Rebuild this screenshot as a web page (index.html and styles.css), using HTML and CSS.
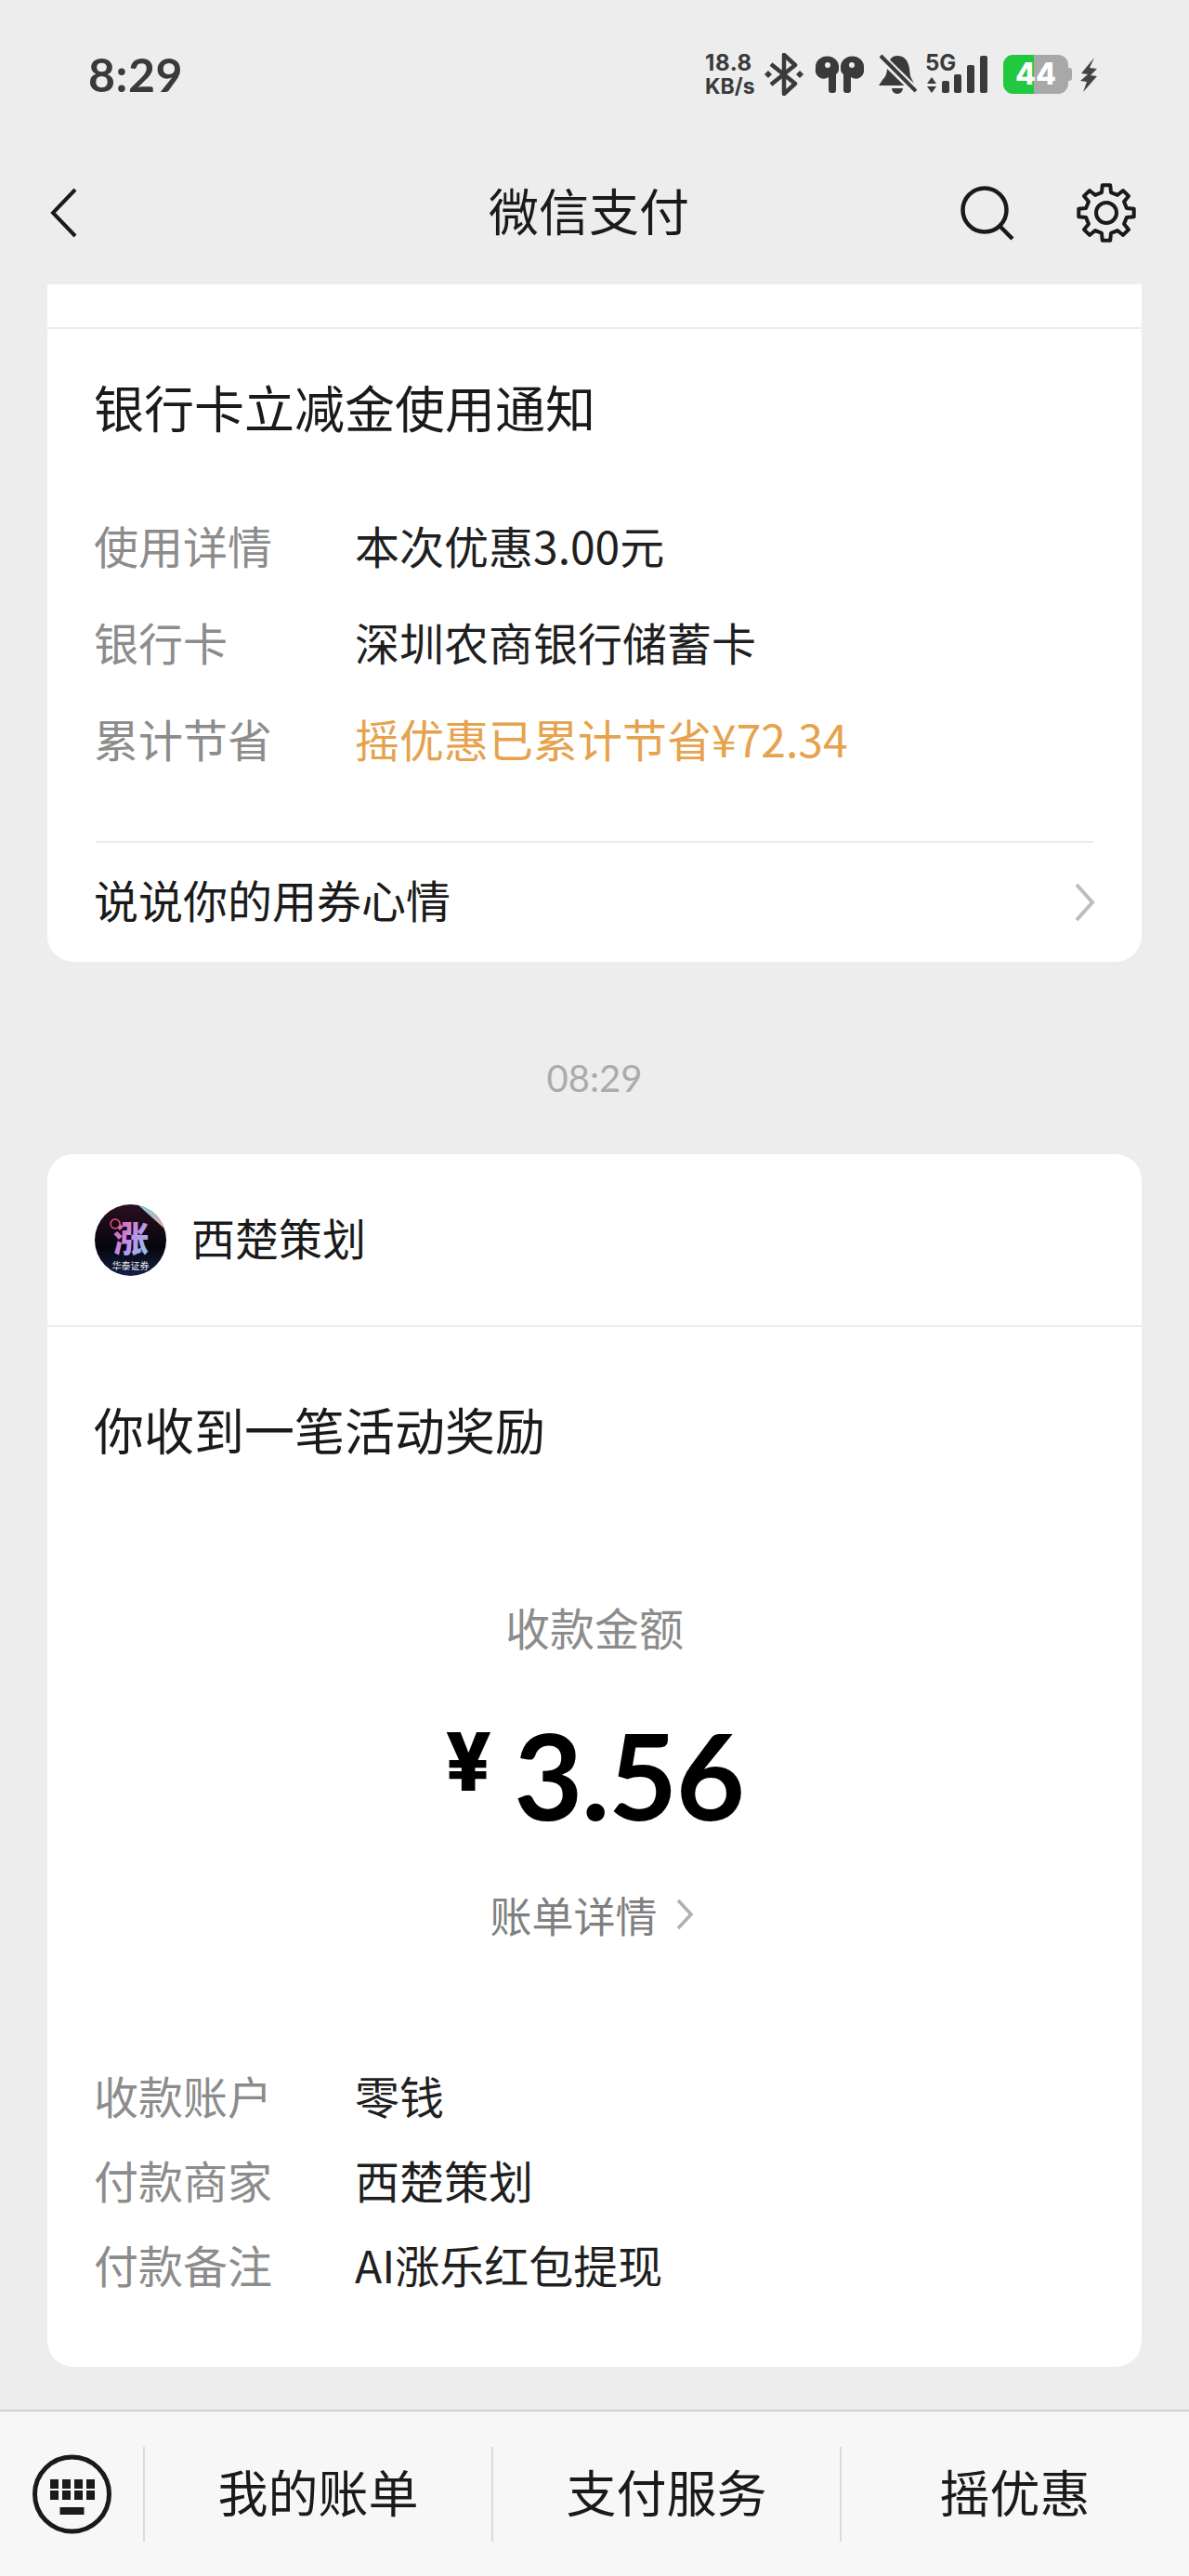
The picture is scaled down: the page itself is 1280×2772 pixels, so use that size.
FILE: index.html
```html
<!DOCTYPE html>
<html lang="zh-CN">
<head>
<meta charset="utf-8">
<link rel="stylesheet" href="styles.css">
</head>
<body>
<div class="screen">
  <header class="status">
    <span class="clock">8:29</span>
    <div class="status-icons">
      <div class="speed"><span class="speed-num">18.8</span><span>KB/s</span></div>
      <svg class="ic-bt" viewBox="0 0 45 46"><path d="M10 12 L36 33 L24 44 V2 L36 13 L10 34" fill="none" stroke="#3a3a3a" stroke-width="4.5" stroke-linejoin="round"/><path d="M3 23l4-4 4 4-4 4zM37 23l4-4 4 4-4 4z" fill="#3a3a3a"/></svg>
      <svg class="ic-pods" viewBox="0 0 56 40"><path d="M4 12a12.500 11.500 0 0 1 25 0v2a7 7 0 0 1-3 6V37a3 3 0 0 1-3 3h-2a3 3 0 0 1-3-3V23a9 9 0 0 1-14-9zM56 12a12.500 11.500 0 0 0-25 0v2a7 7 0 0 0 3 6V37a3 3 0 0 0 3 3h2a3 3 0 0 0 3-3V23a9 9 0 0 0 14-9z" fill="#3a3a3a"/><circle cx="17" cy="10" r="3" fill="#ededed"/><circle cx="43" cy="10" r="3" fill="#ededed"/></svg>
      <svg class="ic-bell" viewBox="0 0 48 44"><path d="M27 2c8 0 12 6 13 14l1 8 3 6 1 4H7l4-6c4-4 5-8 5-13C17 8 20 2 27 2zM21 37h12a6 6 0 0 1-12 0z" fill="#3a3a3a"/><path d="M6 0 L48 41" stroke="#ededed" stroke-width="9"/><path d="M9 2 L47 40" stroke="#3a3a3a" stroke-width="4"/></svg>
      <div class="signal">
        <span class="signal-label">5G</span>
        <svg class="ic-signal" viewBox="0 0 67 46"><path d="M2 33l5-7 5 7zM2 36l5 7 5-7z" fill="#3a3a3a"/><rect x="18" y="30" width="8" height="13" rx="2" fill="#3a3a3a"/><rect x="31" y="23" width="8" height="20" rx="2" fill="#3a3a3a"/><rect x="45" y="13" width="8" height="30" rx="2" fill="#3a3a3a"/><rect x="59" y="3" width="8" height="40" rx="2" fill="#3a3a3a"/></svg>
      </div>
      <svg class="ic-batt" viewBox="0 0 82 42"><path d="M76 14h3a3 3 0 0 1 3 3v8a3 3 0 0 1-3 3h-3z" fill="#a8a8a8"/><rect x="8" y="0" width="70" height="42" rx="11" fill="#a8a8a8"/><path d="M41 0H19A11 11 0 0 0 8 11V31A11 11 0 0 0 19 42H41z" fill="#22c93e"/><text x="43" y="32" class="batt-num" text-anchor="middle">44</text></svg>
      <svg class="ic-bolt" viewBox="0 0 18 37"><path d="M15 0 L1 17 L8 18 L0 25 L7 26 L3 37 L18 20 L11 19 L18 12 L10 11z" fill="#444"/></svg>
    </div>
  </header>

  <nav class="nav">
    <svg class="back" viewBox="0 0 29 54"><path d="M27 2 L3 27 L27 52" fill="none" stroke="#1a1a1a" stroke-width="4"/></svg>
    <h1 class="nav-title">微信支付</h1>
    <svg class="search" viewBox="0 0 58 60"><circle cx="26" cy="27" r="23.500" fill="none" stroke="#1a1a1a" stroke-width="4.500"/><path d="M42 44 L56 58" stroke="#1a1a1a" stroke-width="4.500"/></svg>
    <svg class="gear" viewBox="-33 -33 66 66"><path d="M-5.060-21.900L-4.180-29.700L4.180-29.700L5.060-21.900L11.910-19.060L18.050-23.960L23.960-18.050L19.060-11.910L21.900-5.060L29.700-4.180L29.700 4.180L21.900 5.060L19.060 11.910L23.960 18.050L18.050 23.960L11.910 19.060L5.060 21.900L4.180 29.700L-4.180 29.700L-5.060 21.900L-11.910 19.060L-18.050 23.960L-23.960 18.050L-19.060 11.910L-21.900 5.060L-29.700 4.180L-29.700-4.180L-21.900-5.060L-19.060-11.910L-23.960-18.050L-18.050-23.960L-11.910-19.060Z" fill="none" stroke="#1a1a1a" stroke-width="4" stroke-linejoin="round"/><circle r="11" fill="none" stroke="#1a1a1a" stroke-width="4"/></svg>
  </nav>

  <main class="content">
    <section class="card card-cut">
      <div class="cut-strip"></div>
      <h2 class="card-title first">银行卡立减金使用通知</h2>
      <dl class="rows tall">
        <div class="row"><dt>使用详情</dt><dd>本次优惠3.00元</dd></div>
        <div class="row"><dt>银行卡</dt><dd>深圳农商银行储蓄卡</dd></div>
        <div class="row"><dt>累计节省</dt><dd class="orange">摇优惠已累计节省¥72.34</dd></div>
      </dl>
      <div class="foot">
        <span class="foot-text">说说你的用券心情</span>
        <svg class="chev" viewBox="0 0 22 42"><path d="M2 2 L19 21 L2 40" fill="none" stroke="#bdbdbd" stroke-width="4"/></svg>
      </div>
    </section>

    <div class="stamp">08:29</div>

    <section class="card">
      <div class="merchant">
        <svg class="avatar" viewBox="0 0 77 77">
          <defs>
            <linearGradient id="ag" x1="0" y1="0" x2="1" y2="1"><stop offset="0" stop-color="#f0508a"/><stop offset=".5" stop-color="#c58be8"/><stop offset="1" stop-color="#7fd0f5"/></linearGradient>
            <linearGradient id="bg" x1="0" y1="0" x2="0" y2="1"><stop offset="0" stop-color="#2a0f1f"/><stop offset=".6" stop-color="#05050c"/><stop offset="1" stop-color="#14204a"/></linearGradient>
            <linearGradient id="cn" x1="0" y1="0" x2="1" y2="1"><stop offset="0" stop-color="#6fd9e8"/><stop offset="1" stop-color="#f0a0a0"/></linearGradient>
            <clipPath id="cc"><circle cx="38.500" cy="38.500" r="38.500"/></clipPath>
          </defs>
          <g clip-path="url(#cc)">
            <rect width="77" height="77" fill="url(#bg)"/>
            <path d="M46 0H77V28z" fill="url(#cn)"/>
            <text x="39" y="51" class="av-big" text-anchor="middle" fill="url(#ag)">涨</text>
            <circle cx="22" cy="21" r="5" fill="#1a0a14" stroke="#f0508a" stroke-width="1.500"/>
            <text x="38.500" y="70" class="av-small" text-anchor="middle">华泰证券</text>
          </g>
        </svg>
        <span class="merchant-name">西楚策划</span>
      </div>
      <h2 class="card-title second">你收到一笔活动奖励</h2>
      <div class="amount-label">收款金额</div>
      <div class="amount"><span class="yen">¥</span><span class="num">3.56</span></div>
      <div class="bill">
        <span>账单详情</span>
        <svg class="chev-small" viewBox="0 0 18 34"><path d="M2 2 L16 17 L2 32" fill="none" stroke="#b0b0b0" stroke-width="3.500"/></svg>
      </div>
      <dl class="rows short">
        <div class="row"><dt>收款账户</dt><dd>零钱</dd></div>
        <div class="row"><dt>付款商家</dt><dd>西楚策划</dd></div>
        <div class="row"><dt>付款备注</dt><dd>AI涨乐红包提现</dd></div>
      </dl>
    </section>
  </main>

  <footer class="bar">
    <div class="kb">
      <svg class="kb-icon" viewBox="0 0 85 86">
        <circle cx="42.500" cy="43" r="40" fill="none" stroke="#1a1a1a" stroke-width="5"/>
        <g fill="#1a1a1a">
          <rect x="19" y="27" width="9" height="10"/><rect x="32" y="27" width="9" height="10"/><rect x="45" y="27" width="9" height="10"/><rect x="58" y="27" width="9" height="10"/>
          <rect x="19" y="39" width="9" height="10"/><rect x="32" y="39" width="9" height="10"/><rect x="45" y="39" width="9" height="10"/><rect x="58" y="39" width="9" height="10"/>
          <rect x="29.500" y="57" width="26" height="8"/>
        </g>
      </svg>
    </div>
    <div class="tab">我的账单</div>
    <div class="tab">支付服务</div>
    <div class="tab">摇优惠</div>
  </footer>
</div>
</body>
</html>
```
FILE: styles.css
```css
* { box-sizing: border-box; }
html, body { margin: 0; padding: 0; }
body {
  background: #ededed;
  font-family: "Noto Sans CJK SC", "Noto Sans", sans-serif;
  color: #1a1a1a;
}
.screen {
  width: 1280px;
  height: 2772px;
  display: flex;
  flex-direction: column;
  overflow: hidden;
}

/* status bar */
.status {
  height: 152px;
  padding: 8px 99px 0 95px;
  display: flex;
  align-items: center;
  justify-content: space-between;
  flex: none;
}
.clock {
  font-family: Lato, sans-serif;
  font-weight: 700;
  font-size: 50px;
  line-height: 1;
  color: #3a3a3a;
  letter-spacing: 0.5px;
}
.status-icons { display: flex; align-items: center; gap: 9px; }
.speed {
  width: 52px;
  display: flex;
  flex-direction: column;
  gap: 3px;
  font-family: Inter, sans-serif;
  font-weight: 700;
  font-size: 23px;
  line-height: 23px;
  color: #3a3a3a;
  white-space: nowrap;
}
.speed-num { font-size: 24px; letter-spacing: 0.6px; }
.ic-bt { width: 45px; height: 46px; }
.ic-pods { width: 56px; height: 40px; }
.ic-bell { width: 48px; height: 44px; }
.signal { display: grid; width: 67px; height: 46px; }
.signal-label {
  grid-area: 1 / 1;
  align-self: start;
  font-family: Inter, sans-serif;
  font-weight: 700;
  font-size: 24px;
  line-height: 22px;
  color: #3a3a3a;
}
.ic-signal { grid-area: 1 / 1; width: 67px; height: 46px; }
.ic-batt { width: 82px; height: 42px; }
.ic-bolt { width: 18px; height: 37px; }
.batt-num { font-family: Inter, sans-serif; font-weight: 800; font-size: 32px; fill: #fff; }

/* nav */
.nav {
  height: 154px;
  flex: none;
  padding-left: 54px;
  display: flex;
  align-items: center;
}
.back { width: 29px; height: 54px; }
.nav-title {
  margin: 0 0 0 443px;
  padding-bottom: 7px;
  font-size: 54px;
  font-weight: 400;
  line-height: 70px;
  color: #1a1a1a;
}
.search { width: 58px; height: 60px; margin-left: 292px; }
.gear { width: 66px; height: 66px; margin-left: 66px; }

/* content */
.content { flex: 1; padding: 0 51px; min-height: 0; }
.card {
  background: #fff;
  border-radius: 28px;
  width: 1178px;
  padding: 0 52px;
}
.card-cut { border-radius: 0 0 28px 28px; height: 729px; }
.cut-strip { height: 48px; margin: 0 -52px; border-bottom: 2px solid #ececec; }
.card-title {
  margin: 0 0 0 -2px;
  font-size: 54px;
  font-weight: 400;
  line-height: 80px;
  color: #1a1a1a;
}
.card-title.first { margin-top: 44px; }
.card-title.second { margin-top: 70px; }

.rows { margin: 0 0 0 -2px; }
.rows.tall { margin-top: 59px; }
.rows.short { margin-top: 122px; padding-bottom: 62px; }
.row { display: flex; align-items: center; font-size: 48px; padding-bottom: 7px; }
.rows.tall .row { height: 104px; }
.rows.short .row { height: 91px; }
.row dt { width: 281px; color: #8c8c8c; flex: none; }
.row dd { margin: 0; color: #1f1f1f; }
.row dd.orange { color: #e6a24c; }

.foot {
  margin-top: 56px;
  height: 130px;
  border-top: 2px solid #ececec;
  display: flex;
  align-items: center;
  justify-content: space-between;
  font-size: 48px;
}
.foot-text { margin: 0 0 9px -2px; }
.chev { width: 22px; height: 42px; margin-right: -2px; }

.stamp {
  height: 207px;
  padding-top: 100px;
  text-align: center;
  font-family: Lato, sans-serif;
  font-size: 40px;
  line-height: 50px;
  color: #ababab;
}

.merchant {
  height: 186px;
  margin: 0 -52px;
  padding-left: 51px;
  border-bottom: 2px solid #ececec;
  display: flex;
  align-items: center;
}
.avatar { width: 77px; height: 77px; flex: none; }
.av-big { font-family: "Noto Sans CJK SC", sans-serif; font-weight: 900; font-size: 38px; }
.av-small { font-family: "Noto Sans CJK SC", sans-serif; font-size: 10px; fill: #e8e8e8; }
.merchant-name { margin: 0 0 8px 27px; font-size: 47px; color: #1a1a1a; }

.amount-label {
  margin-top: 142px;
  text-align: center;
  font-size: 48px;
  line-height: 60px;
  color: #8c8c8c;
}
.amount {
  margin-top: 60px;
  height: 140px;
  display: flex;
  align-items: center;
  justify-content: center;
  color: #000;
  font-family: Lato, sans-serif;
}
.yen { font-family: Inter, sans-serif; font-weight: 800; font-size: 86px; line-height: 1; margin-right: 24px; position: relative; top: -14px; }
.num { font-size: 128px; font-weight: 700; line-height: 140px; letter-spacing: -1.5px; }

.bill {
  margin-top: 50px;
  height: 60px;
  padding-right: 10px;
  display: flex;
  align-items: center;
  justify-content: center;
  gap: 20px;
  font-size: 45px;
  color: #808080;
}
.chev-small { width: 18px; height: 34px; margin-right: -3px; }

/* bottom bar */
.bar {
  height: 179px;
  flex: none;
  background: #f7f7f7;
  border-top: 2px solid #cfcfcf;
  display: flex;
  align-items: center;
}
.kb {
  width: 154px;
  padding-left: 35px;
  height: 102px;
  display: flex;
  align-items: center;
  flex: none;
}
.kb-icon { width: 85px; height: 86px; }
.tab {
  width: 375px;
  height: 102px;
  flex: none;
  border-left: 2px solid #dadada;
  padding-bottom: 7px;
  display: flex;
  align-items: center;
  justify-content: center;
  font-size: 54px;
  color: #1a1a1a;
}
```
